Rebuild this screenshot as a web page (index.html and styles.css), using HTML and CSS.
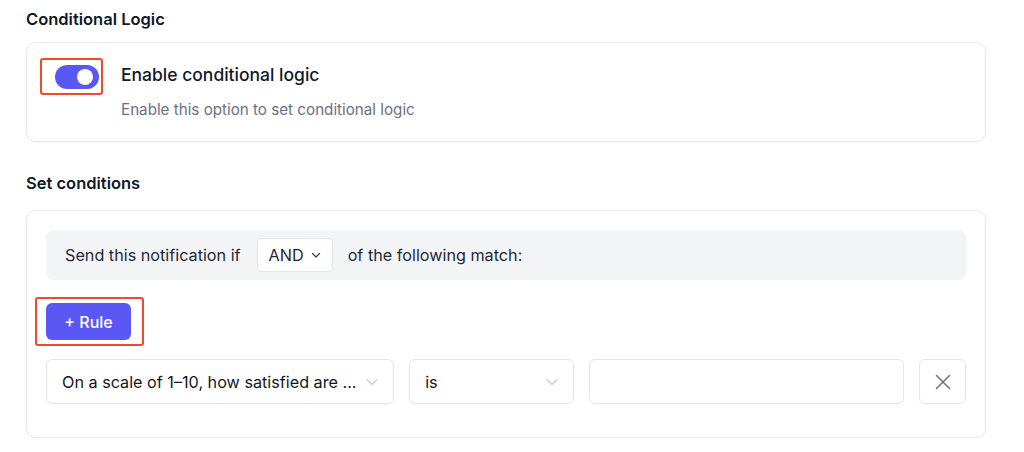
FILE: index.html
```html
<!DOCTYPE html>
<html lang="en">
<head>
    <meta charset="UTF-8">
    <meta name="viewport" content="width=device-width, initial-scale=1.0">
    <title>Conditional Logic</title>
    <link rel="stylesheet" href="styles.css">
</head>
<body>

    <div class="settings">
        <h3 class="section-title first">Conditional Logic</h3>

        <!-- Toggle card -->
        <div class="card toggle-card">
            <div class="toggle-cell marked marked-toggle">
                <span class="switch on"><span class="knob"></span></span>
            </div>
            <div class="toggle-text">
                <div class="toggle-label">Enable conditional logic</div>
                <div class="toggle-hint">Enable this option to set conditional logic</div>
            </div>
        </div>

        <h3 class="section-title second">Set conditions</h3>

        <!-- Conditions card -->
        <div class="card conditions-card">
            <div class="match-bar">
                <span>Send this notification if</span>
                <div class="mini-select">
                    AND
                    <svg width="12" height="12" viewBox="0 0 12 12" fill="none"><path d="M2.5 4.5L6 8l3.5-3.5" stroke="#374151" stroke-width="1.3" stroke-linecap="round" stroke-linejoin="round"/></svg>
                </div>
                <span>of the following match:</span>
            </div>

            <div class="rule-action">
                <span class="marked marked-button">
                    <button type="button" class="btn-rule">+ Rule</button>
                </span>
            </div>

            <div class="rule-row">
                <div class="field select-field field-question">
                    <span class="field-value">On a scale of 1–10, how satisfied are ...</span>
                    <svg width="14" height="14" viewBox="0 0 14 14" fill="none"><path d="M2 4.5L7 9.5l5-5" stroke="#c9ccd2" stroke-width="1.1" stroke-linecap="round" stroke-linejoin="round"/></svg>
                </div>
                <div class="field select-field field-operator">
                    <span class="field-value">is</span>
                    <svg width="14" height="14" viewBox="0 0 14 14" fill="none"><path d="M2 4.5L7 9.5l5-5" stroke="#c9ccd2" stroke-width="1.1" stroke-linecap="round" stroke-linejoin="round"/></svg>
                </div>
                <input type="text" class="field field-value-input">
                <button type="button" class="btn-remove">
                    <svg width="16" height="16" viewBox="0 0 16 16" fill="none"><path d="M1.5 1.5l13 13M14.5 1.5l-13 13" stroke="#6b7280" stroke-width="1.5" stroke-linecap="round"/></svg>
                </button>
            </div>
        </div>
    </div>

</body>
</html>
```

FILE: styles.css
```css
body {
    margin: 0;
    background: #fff;
    font-family: Inter, "Noto Sans", Arial, sans-serif;
    color: #111827;
}
.settings {
    width: 960px;
    padding: 7px 0 0 26px;
}
.section-title {
    font-size: 16.5px;
    font-weight: 600;
    line-height: 24px;
    margin: 0;
    color: #111827;
}
.section-title.first {
    margin-bottom: 11px;
}
.section-title.second {
    margin: 29px 0 15px;
}
.card {
    background: #fff;
    border: 1px solid #e7e8ec;
    border-radius: 10px;
    box-shadow: 0 1px 2px rgba(17, 24, 39, 0.03);
}

/* Toggle card */
.toggle-card {
    display: flex;
    align-items: flex-start;
    padding: 20px 28px 21px 28px;
}
.toggle-cell {
    width: 44px;
    height: 24px;
    margin-top: 2px;
    margin-right: 22px;
}
.switch {
    display: block;
    width: 44px;
    height: 24px;
    border-radius: 12px;
    background: #d1d5db;
    position: relative;
}
.switch.on {
    background: #5b57f5;
}
.knob {
    position: absolute;
    top: 4px;
    left: 4px;
    width: 16px;
    height: 16px;
    border-radius: 50%;
    background: #fff;
}
.switch.on .knob {
    left: 22px;
}
.toggle-label {
    font-size: 17.5px;
    font-weight: 500;
    line-height: 24px;
    color: #111827;
}
.toggle-hint {
    margin-top: 13px;
    font-size: 15.2px;
    line-height: 20px;
    color: #6b7280;
}

/* Red outline marking an element */
.marked {
    position: relative;
    display: inline-block;
}
.marked::after {
    content: "";
    position: absolute;
    border: 2px solid #ef4a2b;
    border-radius: 3px;
    pointer-events: none;
}
.marked-toggle::after {
    top: -7px;
    bottom: -6px;
    left: -15px;
    right: -4px;
}
.marked-button::after {
    top: -6px;
    bottom: -6px;
    left: -11px;
    right: -13px;
}

/* Conditions card */
.conditions-card {
    padding: 19px 19px 33px 19px;
}
.match-bar {
    display: flex;
    align-items: center;
    height: 50px;
    padding: 0 19px;
    background: #f3f4f6;
    border-radius: 8px;
    font-size: 16.2px;
    color: #1f2937;
}
.mini-select {
    display: flex;
    align-items: center;
    gap: 6px;
    height: 32px;
    margin: 0 15px 0 16px;
    padding: 0 10px 0 11px;
    background: #fff;
    border: 1px solid #e2e4e8;
    border-radius: 4px;
    font-size: 16.2px;
    color: #1f2937;
}
.rule-action {
    margin-top: 23px;
}
.btn-rule {
    display: block;
    width: 85px;
    height: 37px;
    border: none;
    border-radius: 6px;
    background: #5b57f5;
    color: #fff;
    font-family: inherit;
    font-size: 16px;
    font-weight: 500;
    cursor: pointer;
}
.rule-row {
    display: flex;
    gap: 15px;
    margin-top: 19px;
}
.field {
    height: 45px;
    box-sizing: border-box;
    border: 1px solid #e4e6ea;
    border-radius: 6px;
    background: #fff;
    font-family: inherit;
    font-size: 16.2px;
    color: #111827;
}
.select-field {
    display: flex;
    align-items: center;
    justify-content: space-between;
    padding: 0 14px 0 15px;
}
.field-question {
    width: 349px;
}
.field-operator {
    width: 165px;
}
.field-value-input {
    width: 316px;
    padding: 0 14px;
    outline: none;
}
.btn-remove {
    width: 47px;
    height: 45px;
    display: flex;
    align-items: center;
    justify-content: center;
    background: #fff;
    border: 1px solid #e4e6ea;
    border-radius: 6px;
    cursor: pointer;
}
```
